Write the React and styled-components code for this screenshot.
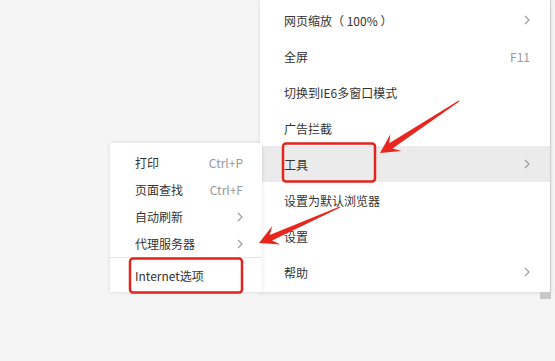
import React from 'react';
import styled, { createGlobalStyle } from 'styled-components';

const GlobalStyle = createGlobalStyle`
  html, body {
    margin: 0;
    padding: 0;
    background: #f5f5f5;
  }
  #root {
    height: 361px;
    overflow: hidden;
  }
`;

const Page = styled.div`
  position: relative;
  height: 361px;
  font-family: "Noto Sans CJK SC", "Noto Sans", sans-serif;
  font-size: 12px;
  color: #333;
`;

const Stage = styled.div`
  display: flex;
  align-items: flex-start;
  padding-left: 110px;
`;

const SubMenu = styled.div`
  position: relative;
  z-index: 2;
  width: 152px;
  margin-top: 143px;
  margin-right: -2px;
  padding-top: 6px;
  background: #fff;
  box-shadow: 0 0 4px rgba(0, 0, 0, 0.12);
`;

const MainColumn = styled.div`
  display: flex;
  flex-direction: column;
  align-items: flex-end;
`;

const MainMenu = styled.div`
  width: 290px;
  height: 288px;
  padding: 2px 0;
  background: #fff;
  border-right: 1px solid #cfcfcf;
  box-shadow: 0 1px 4px rgba(0, 0, 0, 0.12);
`;

const ScrollNub = styled.div`
  width: 11px;
  height: 7px;
  background: #c9c9c9;
`;

const Row = styled.div`
  display: flex;
  align-items: center;
  justify-content: space-between;
  height: ${(p) => p.$h}px;
  padding: 0 ${(p) => p.$pr}px 0 ${(p) => p.$pl}px;
  background: ${(p) => (p.$active ? '#ebebeb' : 'transparent')};
`;

const Label = styled.span`
  white-space: pre;
`;

const Hint = styled.span`
  color: #999;
  white-space: nowrap;
`;

const Divider = styled.div`
  height: 1px;
  background: #e6e6e6;
`;

const Chevron = () => (
  <svg width="6" height="10" viewBox="0 0 6 10">
    <polyline points="1,1 5,5 1,9" fill="none" stroke="#999" strokeWidth="1.1" />
  </svg>
);

const Overlay = styled.svg`
  position: absolute;
  left: 0;
  top: 0;
  z-index: 5;
  pointer-events: none;
`;

// build an arrow polygon from tail to tip
const arrowPoints = (tx, ty, px, py) => {
  const dx = px - tx;
  const dy = py - ty;
  const len = Math.hypot(dx, dy);
  const ux = dx / len;
  const uy = dy / len;
  const nx = -uy;
  const ny = ux;
  const headLen = 19;
  const neckLen = 13;
  const at = (d, w) => [px - ux * d + nx * w, py - uy * d + ny * w];
  const pts = [
    [tx + nx * 0.6, ty + ny * 0.6],
    at(neckLen, 3),
    at(headLen, 10),
    [px, py],
    at(headLen, -10),
    at(neckLen, -3),
    [tx - nx * 0.6, ty - ny * 0.6],
  ];
  return pts.map((p) => p.map((v) => v.toFixed(1)).join(',')).join(' ');
};

const mainItems = [
  { label: '网页缩放（ 100% ）', arrow: true },
  { label: '全屏', hint: 'F11' },
  { label: '切换到IE6多窗口模式' },
  { label: '广告拦截' },
  { label: '工具', arrow: true, active: true },
  { label: '设置为默认浏览器' },
  { label: '设置' },
  { label: '帮助', arrow: true },
];

const subItems = [
  { label: '打印', hint: 'Ctrl+P' },
  { label: '页面查找', hint: 'Ctrl+F' },
  { label: '自动刷新', arrow: true },
  { label: '代理服务器', arrow: true },
];

const App = () => (
  <Page>
    <GlobalStyle />
    <Stage>
      <SubMenu>
        {subItems.map((it) => (
          <Row key={it.label} $h={27} $pl={25} $pr={19}>
            <Label>{it.label}</Label>
            {it.hint && <Hint>{it.hint}</Hint>}
            {it.arrow && <Chevron />}
          </Row>
        ))}
        <Divider />
        <Row $h={34} $pl={25} $pr={19}>
          <Label>Internet选项</Label>
        </Row>
      </SubMenu>
      <MainColumn>
        <MainMenu>
          {mainItems.map((it) => (
            <Row key={it.label} $h={36} $pl={24} $pr={20} $active={it.active}>
              <Label>{it.label}</Label>
              {it.hint && <Hint>{it.hint}</Hint>}
              {it.arrow && <Chevron />}
            </Row>
          ))}
        </MainMenu>
        <ScrollNub />
      </MainColumn>
    </Stage>
    <Overlay width="555" height="361">
      <rect x="283" y="143.5" width="92" height="38" rx="3" fill="none" stroke="#e3241c" strokeWidth="2.5" />
      <rect x="130" y="258.5" width="112" height="34" rx="3" fill="none" stroke="#e3241c" strokeWidth="2.5" />
      <polygon points={arrowPoints(459, 101, 380, 153)} fill="#e8261e" />
      <polygon points={arrowPoints(340, 207, 259, 243)} fill="#e8261e" />
    </Overlay>
  </Page>
);

export default App;
